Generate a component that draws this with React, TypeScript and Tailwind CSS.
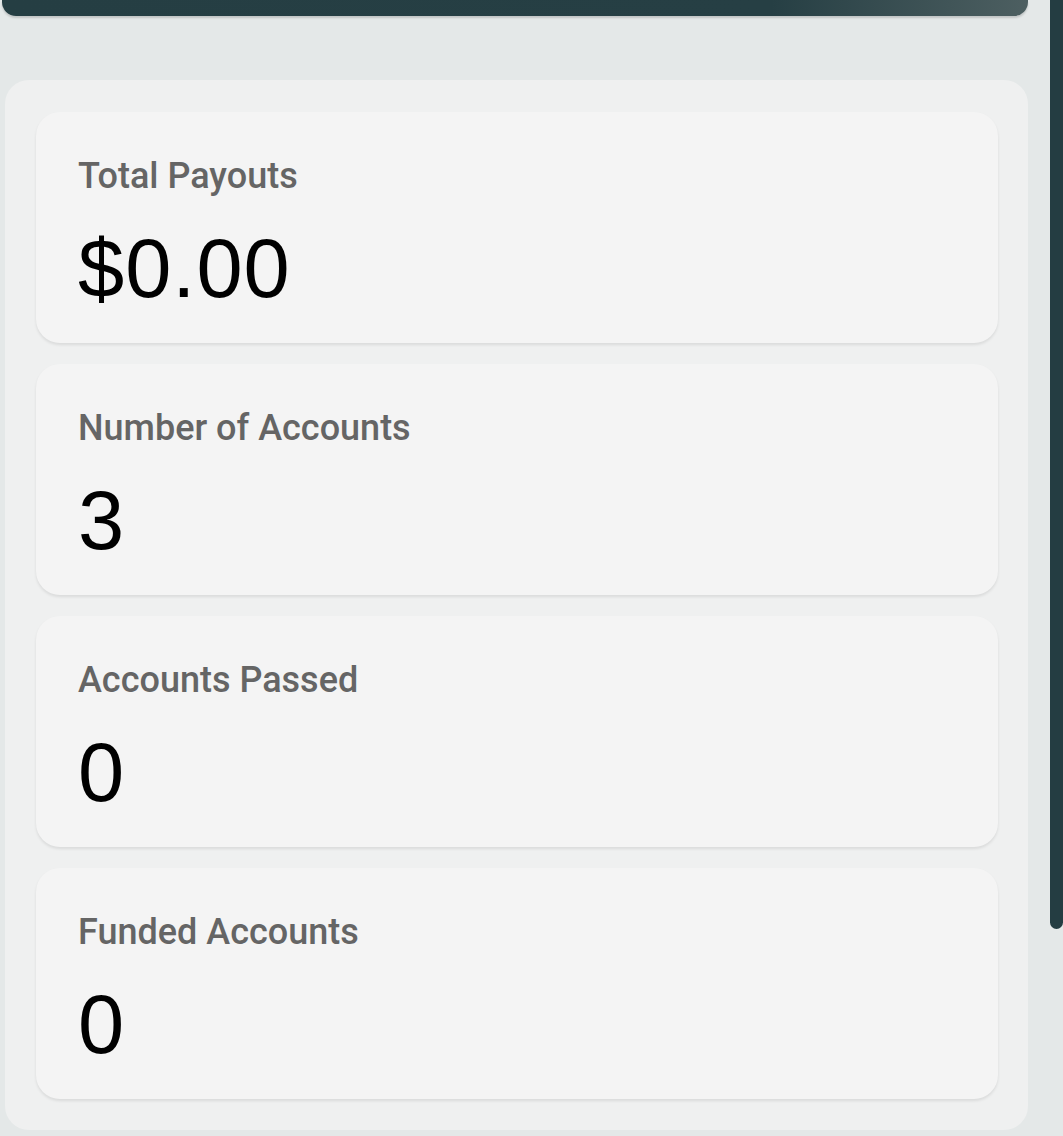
const stats = [
  { label: "Total Payouts", value: "$0.00" },
  { label: "Number of Accounts", value: "3" },
  { label: "Accounts Passed", value: "0" },
  { label: "Funded Accounts", value: "0" },
];

function StatCard({ label, value }: { label: string; value: string }) {
  return (
    <div className="rounded-[24px] bg-[#f4f4f4] pl-[42px] pt-[43px] pb-[33px] shadow-[0_2px_3px_rgba(0,0,0,0.09)]">
      <div className="font-['Roboto',sans-serif] text-[36px] font-medium leading-[42px] text-[#656565]">{label}</div>
      <div className="mt-[30px] text-[83px] leading-none text-black tracking-[1px]">{value}</div>
    </div>
  );
}

export default function App() {
  return (
    <div className="flex h-[1136px] w-full overflow-hidden bg-[#e4e8e8] font-['Liberation_Sans',Arial,sans-serif]">
      <div className="flex w-[1048px] flex-col">
        {/* Header bar, scrolled mostly out of view */}
        <div className="ml-[2px] h-[16px] w-[1026px] shrink-0 rounded-b-[14px] bg-gradient-to-r from-[#253e43] via-[#263f44] via-75% to-[#4d5f61] shadow-[0_2px_2px_rgba(0,0,0,0.15)]"></div>

        {/* Stats panel */}
        <div className="ml-[5px] mt-[64px] flex w-[1023px] shrink-0 flex-col gap-[21px] rounded-[24px] bg-[#eff0f0] pl-[31px] pr-[30px] pt-[32px] pb-[31px]">
          {stats.map((s) => (
            <StatCard key={s.label} label={s.label} value={s.value} />
          ))}
        </div>
      </div>

      {/* Scrollbar */}
      <div className="flex-1 pl-[2px]">
        <div className="h-[929px] w-[13px] rounded-b-[7px] bg-[#243d42]"></div>
      </div>
    </div>
  );
}
